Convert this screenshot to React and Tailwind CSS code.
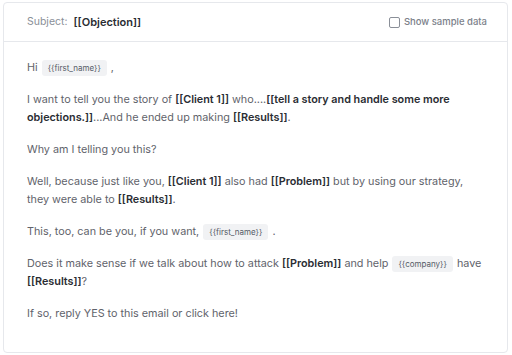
import React from "react";

const Chip = ({ children }) => (
  <span className="mx-[1px] inline-flex h-[16px] items-center rounded-[3px] bg-[#f1f2f4] px-[6px] align-middle text-[8px] leading-none text-[#555b66]">
    {children}
  </span>
);

const B = ({ children }) => (
  <span className="font-semibold text-[#2a2d33]">{children}</span>
);

export default function App() {
  return (
    <div className="min-h-[355px] bg-white p-[2px_4px_3px_3px] font-['Inter',sans-serif]">
      <div className="rounded-[4px] border border-[#e6e8ec] bg-white">
        {/* Header */}
        <div className="flex h-[39px] items-center justify-between border-b border-[#e6e8ec] pl-[23px] pr-[20px]">
          <div className="flex items-center gap-[6px]">
            <span className="text-[10.5px] text-[#8a8f98]">Subject:</span>
            <span className="text-[11px] font-semibold text-[#2a2d33]">
              [[Objection]]
            </span>
          </div>
          <label className="flex items-center gap-[4px] text-[9.5px] font-medium text-[#7c818a]">
            <span className="h-[11px] w-[11px] rounded-[2px] border border-[#8a8f98] bg-white" />
            Show sample data
          </label>
        </div>

        {/* Body */}
        <div className="space-y-[14px] pb-[29px] pl-[23px] pr-[24px] pt-[17px] text-[10.8px] leading-[18px] text-[#5f636b]">
          <p>
            Hi <Chip>{"{{first_name}}"}</Chip> ,
          </p>
          <p>
            I want to tell you the story of <B>[[Client 1]]</B> who....
            <B>[[tell a story and handle some more objections.]]</B>...And he
            ended up making <B>[[Results]]</B>.
          </p>
          <p>Why am I telling you this?</p>
          <p>
            Well, because just like you, <B>[[Client 1]]</B> also had{" "}
            <B>[[Problem]]</B> but by using our strategy, they were able to{" "}
            <B>[[Results]]</B>.
          </p>
          <p>
            This, too, can be you, if you want, <Chip>{"{{first_name}}"}</Chip> .
          </p>
          <p>
            Does it make sense if we talk about how to attack <B>[[Problem]]</B>{" "}
            and help <Chip>{"{{company}}"}</Chip> have <B>[[Results]]</B>?
          </p>
          <p>If so, reply YES to this email or click here!</p>
        </div>
      </div>
    </div>
  );
}
